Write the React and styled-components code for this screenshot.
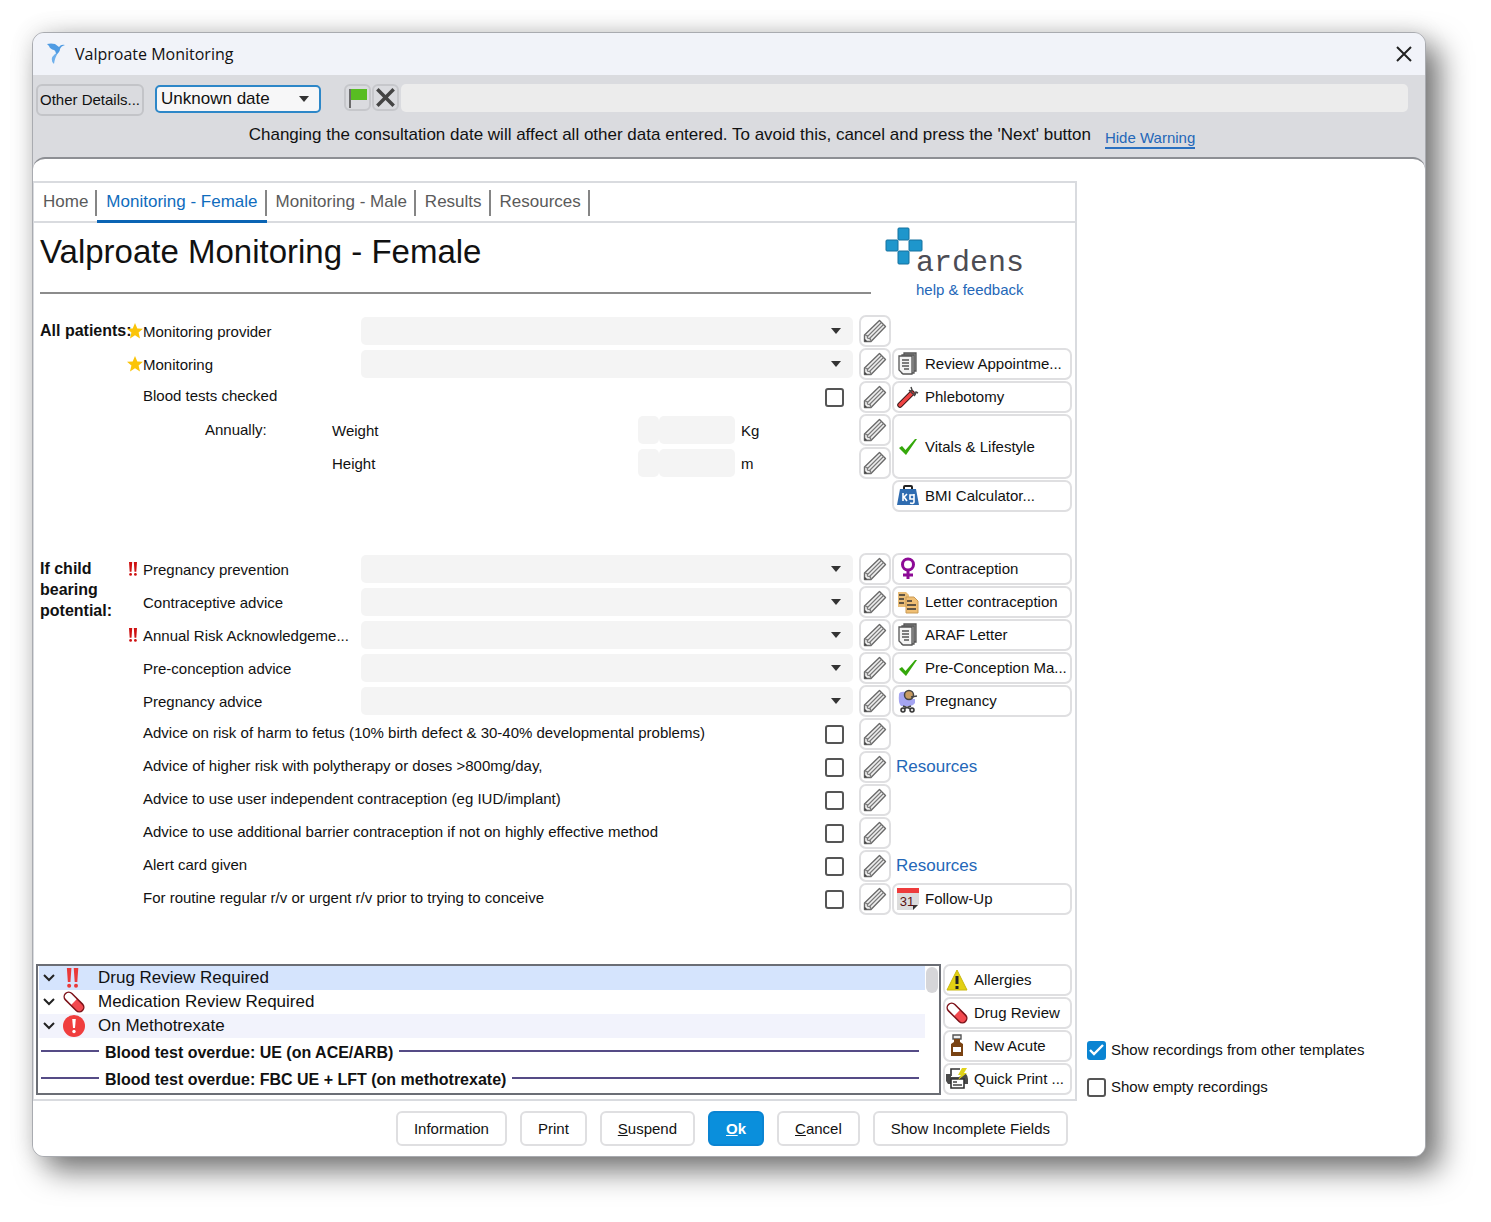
import React, { Fragment } from "react";
import styled, { createGlobalStyle, css } from "styled-components";

const GlobalStyle = createGlobalStyle`
  * {
    box-sizing: border-box;
  }

  body {
    margin: 0;
    background: #fff;
    color: #111;
    font-family: "Liberation Sans", Arial, sans-serif;
    font-size: 15px;
    line-height: 20px;
  }

  button, input, select {
    font: inherit;
    color: inherit;
    margin: 0;
  }
`;

const Desktop = styled.div`
  padding: 32px 65px 65px 32px;
`;

const Window = styled.main`
  border: 1px solid #a9abb0;
  border-radius: 12px;
  background: #dadbdf;
  overflow: hidden;
  box-shadow: 14px 14px 30px rgba(0, 0, 0, 0.52), 0 0 24px rgba(0, 0, 0, 0.12);
`;

const TitleBar = styled.header`
  display: flex;
  align-items: center;
  gap: 8px;
  height: 42px;
  padding: 0 12px;
  background: #f1f3f9;
  font-family: "Open Sans", "Noto Sans", sans-serif;
  font-size: 16px;
`;

const WindowTitle = styled.span`
  flex: 1;
`;

const CloseButton = styled.button`
  display: flex;
  padding: 0;
  border: 0;
  background: none;
`;

const Toolbar = styled.div`
  padding: 9px 17px 8px 3px;
`;

const ToolbarRow = styled.div`
  display: flex;
  align-items: flex-start;
`;

const DetailsButton = styled.button`
  height: 32px;
  padding: 0 2px;
  border: 2px solid #c3c4c8;
  border-radius: 6px;
  background: #dadbdf;
  white-space: nowrap;
`;

const SelectBox = styled.div`
  display: grid;
  align-items: center;

  > * {
    grid-area: 1 / 1;
  }

  > svg {
    justify-self: end;
    margin-right: 11px;
    pointer-events: none;
  }
`;

const FieldSelect = styled.select`
  appearance: none;
  width: 100%;
  height: 28px;
  padding: 0 28px 0 6px;
  border: 0;
  border-radius: 5px;
  background: #f4f4f4;
`;

const DateBox = styled(SelectBox)`
  margin: 1px 23px 0 11px;
`;

const DateSelect = styled(FieldSelect)`
  width: 166px;
  padding: 0 28px 0 4px;
  border: 2px solid #2d87c8;
  background: #f7f7f8;
  font-size: 17px;
`;

const ToolButton = styled.button`
  display: flex;
  align-items: center;
  justify-content: center;
  width: 27px;
  height: 27px;
  margin-right: 1px;
  padding: 0;
  border: 2px solid #c6c7cb;
  border-radius: 6px;
  background: #dadbdf;
`;

const NoteInput = styled.input`
  flex: 1;
  min-width: 0;
  height: 28px;
  margin-left: 1px;
  border: 0;
  border-radius: 5px;
  background: #ececec;
`;

const Warning = styled.p`
  display: flex;
  justify-content: center;
  align-items: flex-start;
  gap: 14px;
  margin: 9px 0 0;
  font-size: 17px;
`;

const WarningLink = styled.a`
  margin-top: 4px;
  border-bottom: 2px solid #2a70c0;
  color: #2467b8;
  font-size: 15px;
  line-height: 18px;
  text-decoration: none;
`;

const Content = styled.div`
  display: grid;
  grid-template-columns: minmax(0, 3fr) minmax(0, 1fr);
  padding-top: 22px;
  border-top: 2px solid #8d8f94;
  border-radius: 12px 12px 0 0;
  background: #fff;
`;

const Panel = styled.section`
  border: 2px solid #d9dbdf;
  border-left-width: 1px;
`;

const Tabs = styled.nav`
  display: flex;
  height: 40px;
  border-bottom: 2px solid #d9dbdf;
`;

const Tab = styled.button`
  position: relative;
  height: 40px;
  padding: 0 9px;
  border: 0;
  border-bottom: 3px solid ${({ $active }) => ($active ? "#0a64b4" : "transparent")};
  background: none;
  color: ${({ $active }) => ($active ? "#0f6cbd" : "#5a5a5a")};
  font-size: 17px;

  &::after {
    content: "";
    position: absolute;
    top: 7px;
    right: 0;
    width: 2px;
    height: 26px;
    background: #858585;
  }
`;

const Heading = styled.div`
  display: flex;
  gap: 14px;
  padding: 4px 51px 0 6px;
`;

const HeadingTitle = styled.h1`
  flex: 1;
  height: 67px;
  margin: 0;
  padding-top: 5px;
  border-bottom: 2px solid #8c8c8c;
  font-size: 33px;
  font-weight: 400;
  line-height: 40px;
`;

const Brand = styled.a`
  display: grid;
  grid-template-columns: 31px auto;
  grid-template-rows: 54px auto;
  color: #2467b8;
  font-size: 15px;
  line-height: 18px;
  text-decoration: none;
`;

const BrandName = styled.span`
  align-self: end;
  color: #4c4c54;
  font-family: "Liberation Mono", monospace;
  font-size: 30px;
  line-height: 36px;
`;

const BrandNote = styled.span`
  grid-column: 2;
`;

const Group = styled.section`
  display: flex;
  padding: 0 3px 0 6px;
  margin-top: ${({ $space }) => $space}px;
`;

const GroupTitle = styled.h2`
  width: 87px;
  margin: 0;
  padding-top: 5px;
  font-size: 16px;
  font-weight: 700;
  line-height: 21px;
  white-space: pre;
`;

const Fields = styled.div`
  flex: 1;
  display: grid;
  grid-template-columns: 16px 218px minmax(0, 1fr) 38px 181px;
  grid-auto-rows: 32px;
  row-gap: 1px;
  align-items: center;
`;

const Flag = styled.span`
  grid-column: 1;
  grid-row: ${({ $row }) => $row};
  display: flex;
`;

const Label = styled.label`
  grid-column: 2;
  grid-row: ${({ $row }) => $row};
  padding-top: 2px;
  white-space: nowrap;
`;

const FieldCell = styled(SelectBox)`
  grid-column: 3;
  grid-row: ${({ $row }) => $row};
`;

const CheckRow = styled.label`
  grid-column: 2 / 4;
  grid-row: ${({ $row }) => $row};
  display: flex;
  align-items: center;
  justify-content: space-between;
  padding-right: 9px;
`;

const CheckText = styled.span`
  padding-bottom: 3px;
`;

const Checkbox = styled.input`
  appearance: none;
  width: 19px;
  height: 19px;
  border: 2px solid #555;
  border-radius: 3px;
  background: #fff;

  &:checked {
    border-color: #0a84d2;
    background: #0a84d2;
  }
`;

const MeasureRow = styled.div`
  grid-column: 2 / 4;
  grid-row: ${({ $row }) => $row};
  display: grid;
  grid-template-columns: 127px minmax(0, 1fr) 21px 76px 118px;
  align-items: center;
  padding-left: 62px;
`;

const MeasureInput = styled.input`
  grid-column: ${({ $narrow }) => ($narrow ? 3 : 4)};
  width: 100%;
  height: 28px;
  border: 0;
  border-radius: 5px;
  background: #f4f4f4;
`;

const MeasureLabel = styled.label`
  grid-column: 2;
  padding-top: 2px;
`;

const Unit = styled.span`
  padding: 2px 0 0 6px;
`;

const outlined = css`
  border: 2px solid #dfdfe1;
  border-radius: 7px;
  background: #fff;
`;

const EditButton = styled.button`
  ${outlined}
  grid-column: 4;
  grid-row: ${({ $row }) => $row};
  justify-self: end;
  display: flex;
  align-items: center;
  justify-content: center;
  width: 32px;
  height: 32px;
  padding: 0;
`;

const ActionButton = styled.button`
  ${outlined}
  grid-column: ${({ $row }) => ($row ? 5 : "auto")};
  grid-row: ${({ $row, $span }) => ($row ? `${$row} / span ${$span || 1}` : "auto")};
  align-self: stretch;
  display: flex;
  align-items: center;
  gap: 6px;
  margin-left: 1px;
  padding: 0 0 0 ${({ $row }) => ($row ? 3 : 1)}px;
  white-space: nowrap;
`;

const ResourceLink = styled.a`
  grid-column: 5;
  grid-row: ${({ $row }) => $row};
  padding-left: 5px;
  color: #2467b8;
  font-size: 17px;
  text-decoration: none;
`;

const Alerts = styled.div`
  display: flex;
  gap: 1px;
  margin: 49px 3px 4px 2px;
`;

const AlertList = styled.div`
  flex: 1;
  display: flex;
  min-width: 0;
  padding: 0 1px;
  border: 2px solid #6b6e75;
`;

const AlertItems = styled.ul`
  flex: 1;
  margin: 0;
  padding: 0;
  list-style: none;
`;

const AlertItem = styled.li`
  display: flex;
  align-items: center;
  height: 24px;
  padding-left: 4px;
  background: ${({ $tone }) => $tone};
  font-size: 17px;
`;

const AlertIcon = styled.span`
  display: flex;
  justify-content: center;
  width: 26px;
  margin: 0 11px 0 6px;
`;

const OverdueItem = styled.li`
  display: flex;
  align-items: center;
  gap: 6px;
  height: 27px;
  padding: 3px 6px 0 2px;
  font-size: 16px;
  font-weight: 700;

  &::before, &::after {
    content: "";
    width: 58px;
    height: 2px;
    margin-bottom: 4px;
    background: #554b86;
  }

  &::after {
    flex: 1;
  }
`;

const ScrollThumb = styled.div`
  width: 12px;
  height: 26px;
  margin: 1px 0 0 1px;
  border-radius: 6px;
  background: #d6d6d9;
`;

const AlertActions = styled.div`
  display: grid;
  grid-template-columns: 130px;
  grid-auto-rows: 32px;
  row-gap: 1px;
`;

const Options = styled.aside`
  display: flex;
  flex-direction: column;
  justify-content: flex-end;
  gap: 17px;
  padding: 0 0 4px 10px;
`;

const Option = styled.label`
  display: flex;
  align-items: center;
  gap: 5px;
`;

const TickBox = styled.span`
  display: grid;

  > * {
    grid-area: 1 / 1;
  }

  > svg {
    pointer-events: none;
  }
`;

const Footer = styled.footer`
  display: flex;
  justify-content: flex-end;
  gap: 13px;
  padding: 10px 9px 10px;
`;

const FooterButton = styled.button`
  height: 35px;
  padding: 0 16px;
  border: 2px solid ${({ $primary }) => ($primary ? "#0a84d2" : "#dfdfe1")};
  border-radius: 6px;
  background: ${({ $primary }) => ($primary ? "#0a8fdc" : "#fff")};
  color: ${({ $primary }) => ($primary ? "#fff" : "#111")};
  font-weight: ${({ $primary }) => ($primary ? 700 : 400)};
  white-space: nowrap;
`;

const BirdIcon = () => (
  <svg width="22" height="24" viewBox="0 0 22 24">
    <path d="M2 2Q6 1 10 2L14 5Q16 2 20 3Q16 4 15 7Q15 10 11 13Q11 9 9 8Q5 7 4 4Z" fill="#4f9be3" />
    <path d="M10 12L13 11Q10 15 9 22Q4 17 10 12Z" fill="#6fb0ec" />
  </svg>
);

const CloseIcon = ({ size = 18, width = 2, color = "#222" }) => (
  <svg width={size} height={size} viewBox="0 0 18 18">
    <path d="M2 2 L16 16 M16 2 L2 16" stroke={color} strokeWidth={width} fill="none" />
  </svg>
);

const GreenFlagIcon = () => (
  <svg width="20" height="20" viewBox="0 0 20 20">
    <path d="M2 1V20" stroke="#444" strokeWidth="1.5" />
    <path d="M3 1H19V12H3Z" fill="#58bd22" />
  </svg>
);

const ArrowIcon = () => (
  <svg width="12" height="6" viewBox="0 0 12 6">
    <path d="M1 0H11L6 6Z" fill="#333" />
  </svg>
);

const PencilIcon = () => (
  <svg width="24" height="24" viewBox="0 0 24 24">
    <path d="M1.5 22.5V16L16.5 1.5L22.5 7.5L8 22.5Z" fill="#efefef" stroke="#6a6a6a" strokeWidth="1.4" strokeLinejoin="round" />
    <path d="M4 18L18.5 3.5M6 20L20.5 5.5M1.5 16L4 16.5L4.5 19L7.5 20L8 22.5" fill="none" stroke="#7a7a7a" strokeWidth="1.2" />
    <path d="M1.5 22.5V19.5L4.5 22.5Z" fill="#444" />
  </svg>
);

const PagesIcon = () => (
  <svg width="22" height="24" viewBox="0 0 22 24" stroke="#555" strokeWidth="1.3">
    <path d="M7 1H19V19H7Z" fill="#999" />
    <path d="M5 3H17V21H5Z" fill="#ccc" />
    <path d="M2 4H15V22H6L2 18Z" fill="#f4f4f4" />
    <path d="M5 8H12M5 11H12M5 14H12M7 17H12" />
  </svg>
);

const TubeIcon = () => (
  <svg width="22" height="24" viewBox="0 0 22 24">
    <path d="M3 20L15 8" stroke="#3a1a1a" strokeWidth="5.5" strokeLinecap="round" />
    <path d="M3 20L15 8" stroke="#f04444" strokeWidth="3.5" strokeLinecap="round" />
    <path d="M12 5L18 11M14 2L15 5L13 6M18 10L19 7L21 8" fill="none" stroke="#444" strokeWidth="1.4" />
  </svg>
);

const TickIcon = () => (
  <svg width="22" height="24" viewBox="0 0 22 24">
    <path d="M2 13L5 11L8.5 15L18 4H20L9 20Z" fill="#35a80b" />
  </svg>
);

const WeightIcon = () => (
  <svg width="22" height="24" viewBox="0 0 22 24">
    <path d="M7 6V3Q7 2 8 2H14Q15 2 15 3V6" fill="none" stroke="#222" strokeWidth="2" />
    <path d="M3 5H19L22 21H0Z" fill="#2f6cb0" />
    <path d="M6 9V17M10 10L7 13L10 17" fill="none" stroke="#fff" strokeWidth="1.6" />
    <path d="M17 10V18Q17 20 13 19M17 11H13V15H17" fill="none" stroke="#fff" strokeWidth="1.6" />
  </svg>
);

const FemaleIcon = () => (
  <svg width="22" height="24" viewBox="0 0 22 24" fill="none" stroke="#8d0a96" strokeWidth="3">
    <circle cx="11" cy="7.5" r="5.5" />
    <path d="M11 13V22M6 18H16" />
  </svg>
);

const LettersIcon = () => (
  <svg width="22" height="24" viewBox="0 0 22 24">
    <path d="M1 2H9L12 5V17H1Z" fill="#e9bd78" />
    <path d="M2 5H8M2 9H7M2 13H7" stroke="#333" strokeWidth="1.5" />
    <path d="M9 7H17L21 11V23H9Z" fill="#f0bf74" stroke="#c99a55" />
    <path d="M10 11H15M10 15H19M10 19H19" stroke="#333" strokeWidth="1.6" />
  </svg>
);

const PramIcon = () => (
  <svg width="22" height="24" viewBox="0 0 22 24">
    <path d="M2 5Q3 2 9 3L11 10H18V14Q16 17 12 17H4Q1 14 2 5Z" fill="#a5a5f2" />
    <circle cx="12" cy="6" r="4.5" fill="#c79b62" stroke="#444" strokeWidth="1.5" />
    <path d="M14 8L20 7M6 17L14 20M14 17L6 20" stroke="#444" strokeWidth="1.4" />
    <circle cx="6" cy="21" r="2" fill="#ddd" stroke="#333" strokeWidth="1.5" />
    <circle cx="15" cy="21" r="2" fill="#ddd" stroke="#333" strokeWidth="1.5" />
  </svg>
);

const CalendarIcon = () => (
  <svg width="22" height="24" viewBox="0 0 22 24">
    <path d="M0 1H22V23H0Z" fill="#dcdcdc" />
    <path d="M0 1H22V6H0Z" fill="#ee3b3b" />
    <path d="M16 23L22 17V23Z" fill="#fff" />
    <path d="M16 23V18H21Z" fill="#333" />
    <text x="10" y="19" textAnchor="middle" fontFamily="Liberation Sans" fontSize="13" fill="#5a1010">31</text>
  </svg>
);

const AllergyIcon = () => (
  <svg width="22" height="24" viewBox="0 0 22 24">
    <path d="M11 2L21 22H1Z" fill="#e3d012" stroke="#c9b80c" strokeLinejoin="round" />
    <path d="M11 8V16M11 18V21" stroke="#222" strokeWidth="3" />
  </svg>
);

const PillIcon = () => (
  <svg width="22" height="22" viewBox="0 0 22 22">
    <g transform="rotate(45 11 11)">
      <rect x="-1" y="6.5" width="24" height="9" rx="4.5" fill="#fff" />
      <path d="M11 6.5H18.5A4.5 4.5 0 0 1 18.5 15.5H11Z" fill="#f24a50" />
      <rect x="-1" y="6.5" width="24" height="9" rx="4.5" fill="none" stroke="#7d1219" strokeWidth="1.5" />
    </g>
  </svg>
);

const BottleIcon = () => (
  <svg width="22" height="24" viewBox="0 0 22 24">
    <path d="M7 1H15V5H7Z" fill="#eee" stroke="#555" strokeWidth="1.4" />
    <path d="M8 5H14V8L17 10V22H5V10L8 8Z" fill="#7a4312" />
    <path d="M7 13H15V18H7Z" fill="#fff" />
  </svg>
);

const PrinterIcon = () => (
  <svg width="22" height="24" viewBox="0 0 22 24">
    <path d="M5 9V2H14" fill="#fff" stroke="#333" strokeWidth="1.6" />
    <path d="M0 7H5V10H13L17 7H20Q22 9 22 12V17H18V12H6V17H2L0 14Z" fill="#4a4a4a" />
    <path d="M5 12H18V21H5Z" fill="#fff" stroke="#333" strokeWidth="1.6" />
    <path d="M7 15H11M7 18H16" stroke="#444" strokeWidth="1.5" />
    <path d="M16 1L12 8H15L12 13L21 6H18L21 1Z" fill="#e0d21a" />
  </svg>
);

const StarIcon = () => (
  <svg width="16" height="16" viewBox="0 0 16 16">
    <path d="M8 0L10.3 5.4L16 5.8L11.6 9.6L13 15.4L8 12.2L3 15.4L4.4 9.6L0 5.8L5.7 5.4Z" fill="#fbc408" />
  </svg>
);

const UrgentIcon = ({ size = 14, color = "#cf1212" }) => (
  <svg width={size} height={size} viewBox="0 0 14 14" fill={color}>
    <path d="M2 0H5.2L4.5 9.8H2.7ZM6.8 0H10L9.3 9.8H7.5Z" />
    <circle cx="3.6" cy="12.4" r="1.4" />
    <circle cx="8.4" cy="12.4" r="1.4" />
  </svg>
);

const StopIcon = () => (
  <svg width="22" height="22" viewBox="0 0 22 22">
    <circle cx="11" cy="11" r="11" fill="#f03e3e" />
    <path d="M9.2 4H12.8L12 13H10Z" fill="#fff" />
    <circle cx="11" cy="16.5" r="1.7" fill="#fff" />
  </svg>
);

const ChevronIcon = () => (
  <svg width="12" height="8" viewBox="0 0 12 8">
    <path d="M1 1L6 6L11 1" fill="none" stroke="#222" strokeWidth="2" />
  </svg>
);

const CheckIcon = () => (
  <svg width="19" height="19" viewBox="0 0 19 19">
    <path d="M3 9L7 13L16 4" fill="none" stroke="#fff" strokeWidth="2.4" />
  </svg>
);

const BrandMark = () => (
  <svg width="38" height="38" viewBox="0 0 38 38" fill="#1e96cc" stroke="#14709e" strokeWidth="1">
    <rect x="13" y="1" width="11" height="12" rx="1" />
    <rect x="1" y="13" width="12" height="11" rx="1" />
    <rect x="24" y="13" width="13" height="11" rx="1" />
    <rect x="13" y="24" width="11" height="13" rx="1" />
  </svg>
);

const tabs = ["Home", "Monitoring - Female", "Monitoring - Male", "Results", "Resources"];

const allPatients = [
  { label: "Monitoring provider", flag: "star" },
  { label: "Monitoring", flag: "star", action: "Review Appointme...", icon: PagesIcon },
  { label: "Blood tests checked", type: "check", action: "Phlebotomy", icon: TubeIcon },
  { label: "Weight", type: "measure", prefix: "Annually:", unit: "Kg", action: "Vitals & Lifestyle", icon: TickIcon, span: 2 },
  { label: "Height", type: "measure", unit: "m" },
  { type: "none", action: "BMI Calculator...", icon: WeightIcon },
];

const childBearing = [
  { label: "Pregnancy prevention", flag: "urgent", action: "Contraception", icon: FemaleIcon },
  { label: "Contraceptive advice", action: "Letter contraception", icon: LettersIcon },
  { label: "Annual Risk Acknowledgeme...", flag: "urgent", action: "ARAF Letter", icon: PagesIcon },
  { label: "Pre-conception advice", action: "Pre-Conception Ma...", icon: TickIcon },
  { label: "Pregnancy advice", action: "Pregnancy", icon: PramIcon },
  { label: "Advice on risk of harm to fetus (10% birth defect & 30-40% developmental problems)", type: "check" },
  { label: "Advice of higher risk with polytherapy or doses >800mg/day,", type: "check", link: "Resources" },
  { label: "Advice to use user independent contraception (eg IUD/implant)", type: "check" },
  { label: "Advice to use additional barrier contraception if not on highly effective method", type: "check" },
  { label: "Alert card given", type: "check", link: "Resources" },
  { label: "For routine regular r/v or urgent r/v prior to trying to conceive", type: "check", action: "Follow-Up", icon: CalendarIcon },
];

const alertActions = [
  { label: "Allergies", icon: AllergyIcon },
  { label: "Drug Review", icon: PillIcon },
  { label: "New Acute", icon: BottleIcon },
  { label: "Quick Print ...", icon: PrinterIcon },
];

const Field = ({ field, row, id }) => {
  const { label, type = "select", flag, prefix, unit, action, icon: Icon, span, link } = field;

  return (
    <Fragment>
      {flag && <Flag $row={row}>{flag === "star" ? <StarIcon /> : <UrgentIcon />}</Flag>}
      {type === "select" && (
        <>
          <Label $row={row} htmlFor={id}>{label}</Label>
          <FieldCell $row={row}>
            <FieldSelect id={id} />
            <ArrowIcon />
          </FieldCell>
        </>
      )}
      {type === "check" && (
        <CheckRow $row={row}>
          <CheckText>{label}</CheckText>
          <Checkbox type="checkbox" />
        </CheckRow>
      )}
      {type === "measure" && (
        <MeasureRow $row={row}>
          {prefix && <span>{prefix}</span>}
          <MeasureLabel htmlFor={id}>{label}</MeasureLabel>
          <MeasureInput $narrow aria-label={`${label} qualifier`} />
          <MeasureInput id={id} />
          <Unit>{unit}</Unit>
        </MeasureRow>
      )}
      {type !== "none" && (
        <EditButton $row={row} aria-label={`Edit ${label}`}>
          <PencilIcon />
        </EditButton>
      )}
      {action && (
        <ActionButton $row={row} $span={span}>
          <Icon />
          {action}
        </ActionButton>
      )}
      {link && <ResourceLink $row={row} href="#resources">{link}</ResourceLink>}
    </Fragment>
  );
};

const FieldGroup = ({ title, name, fields, space }) => (
  <Group $space={space}>
    <GroupTitle>{title}</GroupTitle>
    <Fields>
      {fields.map((field, i) => (
        <Field key={i} field={field} row={i + 1} id={`${name}-${i}`} />
      ))}
    </Fields>
  </Group>
);

const App = () => (
  <>
    <GlobalStyle />
    <Desktop>
      <Window>
        <TitleBar>
          <BirdIcon />
          <WindowTitle>Valproate Monitoring</WindowTitle>
          <CloseButton aria-label="Close"><CloseIcon /></CloseButton>
        </TitleBar>

        <Toolbar>
          <ToolbarRow>
            <DetailsButton>Other Details...</DetailsButton>
            <DateBox>
              <DateSelect aria-label="Consultation date">
                <option>Unknown date</option>
              </DateSelect>
              <ArrowIcon />
            </DateBox>
            <ToolButton aria-label="Flag"><GreenFlagIcon /></ToolButton>
            <ToolButton aria-label="Clear"><CloseIcon size={21} width={3} color="#444" /></ToolButton>
            <NoteInput aria-label="Note" />
          </ToolbarRow>
          <Warning>
            Changing the consultation date will affect all other data entered. To avoid this, cancel and press the 'Next' button
            <WarningLink href="#hide">Hide Warning</WarningLink>
          </Warning>
        </Toolbar>

        <Content>
          <Panel>
            <Tabs>
              {tabs.map((tab) => (
                <Tab key={tab} $active={tab === "Monitoring - Female"}>{tab}</Tab>
              ))}
            </Tabs>
            <Heading>
              <HeadingTitle>Valproate Monitoring - Female</HeadingTitle>
              <Brand href="#help">
                <BrandMark />
                <BrandName>ardens</BrandName>
                <BrandNote>help &amp; feedback</BrandNote>
              </Brand>
            </Heading>

            <FieldGroup title="All patients:" name="all" fields={allPatients} space={16} />
            <FieldGroup title={"If child\nbearing\npotential:"} name="child" fields={childBearing} space={41} />

            <Alerts>
              <AlertList>
                <AlertItems>
                  <AlertItem $tone="#d5e4fd">
                    <ChevronIcon />
                    <AlertIcon><UrgentIcon size={20} color="#ea3a3a" /></AlertIcon>
                    Drug Review Required
                  </AlertItem>
                  <AlertItem>
                    <ChevronIcon />
                    <AlertIcon><PillIcon /></AlertIcon>
                    Medication Review Required
                  </AlertItem>
                  <AlertItem $tone="#f2f3fc">
                    <ChevronIcon />
                    <AlertIcon><StopIcon /></AlertIcon>
                    On Methotrexate
                  </AlertItem>
                  <OverdueItem>Blood test overdue: UE (on ACE/ARB)</OverdueItem>
                  <OverdueItem>Blood test overdue: FBC UE + LFT (on methotrexate)</OverdueItem>
                </AlertItems>
                <ScrollThumb />
              </AlertList>
              <AlertActions>
                {alertActions.map(({ label, icon: Icon }) => (
                  <ActionButton key={label}>
                    <Icon />
                    {label}
                  </ActionButton>
                ))}
              </AlertActions>
            </Alerts>
          </Panel>

          <Options>
            <Option>
              <TickBox>
                <Checkbox type="checkbox" defaultChecked />
                <CheckIcon />
              </TickBox>
              Show recordings from other templates
            </Option>
            <Option>
              <Checkbox type="checkbox" />
              Show empty recordings
            </Option>
          </Options>

          <Footer>
            <FooterButton>Information</FooterButton>
            <FooterButton>Print</FooterButton>
            <FooterButton><u>S</u>uspend</FooterButton>
            <FooterButton $primary><u>O</u>k</FooterButton>
            <FooterButton><u>C</u>ancel</FooterButton>
            <FooterButton>Show Incomplete Fields</FooterButton>
          </Footer>
        </Content>
      </Window>
    </Desktop>
  </>
);

export default App;
